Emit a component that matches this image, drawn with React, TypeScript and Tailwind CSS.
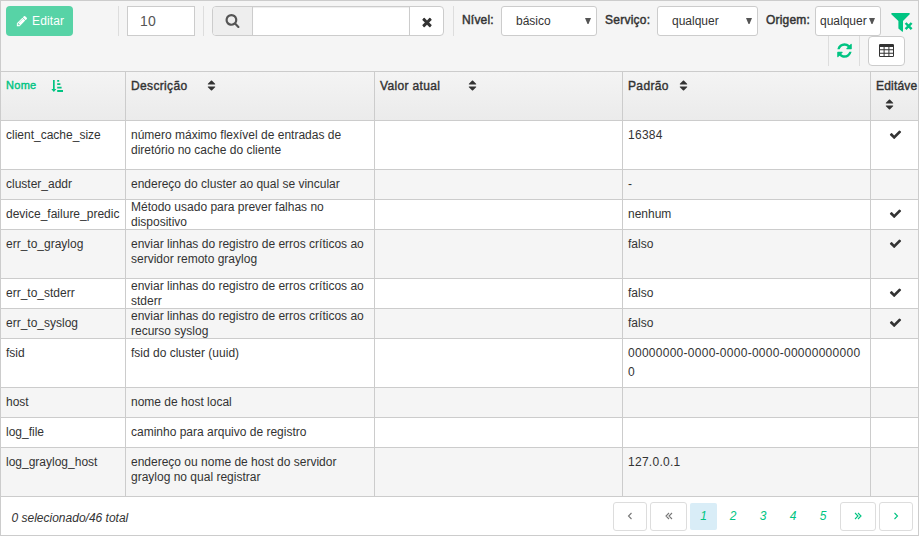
import React from "react";

const glyphs = {
  pencil:
    "M491 1536l91-91-235-235-91 91v107h128v128h107zm523-928q0-22-22-22-10 0-17 7l-542 542q-7 7-7 17 0 22 22 22 10 0 17-7l542-542q7-7 7-17zm-54-192l416 416-832 832h-416v-416zm683 96q0 53-37 90l-166 166-416-416 166-165q36-38 90-38 53 0 91 38l235 234q37 39 37 91z",
  search:
    "M1216 832q0-185-131.5-316.5t-316.5-131.5-316.5 131.5-131.5 316.5 131.5 316.5 316.5 131.5 316.5-131.5 131.5-316.5zm512 832q0 52-38 90t-90 38q-54 0-90-38l-343-342q-179 124-399 124-143 0-273.5-55.5t-225-150-150-225-55.5-273.5 55.5-273.5 150-225 225-150 273.5-55.5 273.5 55.5 225 150 150 225 55.5 273.5q0 220-124 399l343 343q37 37 37 90z",
  times:
    "M1490 1322q0 40-28 68l-136 136q-28 28-68 28t-68-28l-294-294-294 294q-28 28-68 28t-68-28l-136-136q-28-28-28-68t28-68l294-294-294-294q-28-28-28-68t28-68l136-136q28-28 68-28t68 28l294 294 294-294q28-28 68-28t68 28l136 136q28 28 28 68t-28 68l-294 294 294 294q28 28 28 68z",
  check:
    "M1671 566q0 40-28 68l-724 724-136 136q-28 28-68 28t-68-28l-136-136-362-362q-28-28-28-68t28-68l136-136q28-28 68-28t68 28l294 295 656-657q28-28 68-28t68 28l136 136q28 28 28 68z",
  refresh:
    "M1639 1056q0 5-1 7-64 268-268 434.5t-478 166.5q-146 0-282.5-55t-243.5-157l-129 129q-19 19-45 19t-45-19-19-45v-448q0-26 19-45t45-19h448q26 0 45 19t19 45-19 45l-137 137q71 66 161 102t187 36q134 0 250-65t186-179q11-17 53-117 8-23 30-23h192q13 0 22.5 9.5t9.5 22.5zm25-800v448q0 26-19 45t-45 19h-448q-26 0-45-19t-19-45 19-45l138-138q-148-137-349-137-134 0-250 65t-186 179q-11 17-53 117-8 23-30 23h-199q-13 0-22.5-9.5t-9.5-22.5v-7q65-268 270-434.5t480-166.5q146 0 284 55.5t245 156.5l130-129q19-19 45-19t45 19 19 45z",
  sort:
    "M1408 1088q0 26-19 45l-448 448q-19 19-45 19t-45-19l-448-448q-19-19-19-45t19-45 45-19h896q26 0 45 19t19 45zm0-384q0 26-19 45t-45 19h-896q-26 0-45-19t-19-45 19-45l448-448q19-19 45-19t45 19l448 448q19 19 19 45z",
};

function Glyph({ name, className }: { name: keyof typeof glyphs; className: string }) {
  return (
    <svg viewBox="0 0 1792 1792" fill="currentColor" className={`block shrink-0 ${className}`}>
      <path d={glyphs[name]} />
    </svg>
  );
}

function SortAsc() {
  return (
    <svg viewBox="0 0 12 12" fill="currentColor" className="mt-2 ml-[15px] block size-3 shrink-0">
      <path d="M2 0h1.7v9H5.4L2.85 12 .3 9H2zM6.2 0h2v1.8h-2zM6.2 3.3h3.2v1.8H6.2zM6.2 6.7h4.4v1.8H6.2zM6.2 10.1H12v1.8H6.2z" />
    </svg>
  );
}

function FilterClear() {
  return (
    <svg viewBox="0 0 22 19" className="mt-[7px] ml-2 block h-[19px] w-[22px] shrink-0 text-[#00c482]">
      <path fill="currentColor" d="M.8 0h17.4q1 .3.5 1.2L12 8v10.4q-.4.6-1 .2L7.4 15.4V8L.3 1.2Q0 .3.8 0z" />
      <path d="M14.6 10l6 6.2M20.6 10l-6 6.2" stroke="#f5f5f5" strokeWidth="4.4" />
      <path d="M14.6 10l6 6.2M20.6 10l-6 6.2" stroke="currentColor" strokeWidth="2.5" />
    </svg>
  );
}

function TableIcon() {
  return (
    <svg viewBox="0 0 15 13" className="block h-[13px] w-[15px]">
      <path
        fill="currentColor"
        fillRule="evenodd"
        d="M1.3 0h12.4Q15 0 15 1.3v10.4q0 1.3-1.3 1.3H1.3Q0 13 0 11.7V1.3Q0 0 1.3 0zM1 3v2.3h3.6V3zm4.6 0v2.3h3.8V3zm4.8 0v2.3H14V3zM1 6.3v2.4h3.6V6.3zm4.6 0v2.4h3.8V6.3zm4.8 0v2.4H14V6.3zM1 9.7V12h3.6V9.7zm4.6 0V12h3.8V9.7zm4.8 0V12H14V9.7z"
      />
    </svg>
  );
}

function Angle({ double, left }: { double?: boolean; left?: boolean }) {
  return (
    <svg
      viewBox="0 0 8 8"
      fill="none"
      stroke="currentColor"
      strokeWidth="1.1"
      className={`mb-px block size-2 ${left ? "-scale-x-100" : ""}`}
    >
      <path d={double ? "M1 1l3 3-3 3M4 1l3 3-3 3" : "M2.5 1l3 3-3 3"} />
    </svg>
  );
}

function Select({ value, className }: { value: string; className: string }) {
  return (
    <button className={`flex h-[30px] items-center justify-between rounded-[3px] border border-[#ccc] bg-white text-[12px] ${className}`}>
      <span>{value}</span>
      <svg viewBox="0 0 6 6" className="mb-px block size-1.5 shrink-0" fill="#555">
        <path d="M0 0h6L3.5 6h-1z" />
      </svg>
    </button>
  );
}

type Row = { name: string; lines: string[]; def?: string[]; editable?: boolean; tall?: boolean; tight?: boolean };

const rows: Row[] = [
  { name: "client_cache_size", lines: ["número máximo flexível de entradas de", "diretório no cache do cliente"], def: ["16384"], editable: true, tall: true },
  { name: "cluster_addr", lines: ["endereço do cluster ao qual se vincular"], def: ["-"] },
  { name: "device_failure_predic", lines: ["Método usado para prever falhas no", "dispositivo"], def: ["nenhum"], editable: true, tight: true },
  { name: "err_to_graylog", lines: ["enviar linhas do registro de erros críticos ao", "servidor remoto graylog"], def: ["falso"], editable: true, tall: true },
  { name: "err_to_stderr", lines: ["enviar linhas do registro de erros críticos ao", "stderr"], def: ["falso"], editable: true, tight: true },
  { name: "err_to_syslog", lines: ["enviar linhas do registro de erros críticos ao", "recurso syslog"], def: ["falso"], editable: true, tight: true },
  { name: "fsid", lines: ["fsid do cluster (uuid)"], def: ["00000000-0000-0000-0000-00000000000", "0"], tall: true },
  { name: "host", lines: ["nome de host local"] },
  { name: "log_file", lines: ["caminho para arquivo de registro"] },
  { name: "log_graylog_host", lines: ["endereço ou nome de host do servidor", "graylog no qual registrar"], def: ["127.0.0.1"], tall: true },
];

const columns = "grid grid-cols-[124px_249px_248px_248px_48px]";
const cell = "border-l border-[#ccc] pl-[5px] whitespace-nowrap";

export default function App() {
  return (
    <div className="flex h-[536px] w-[919px] flex-col overflow-hidden border border-[#ccc] bg-white font-['Liberation_Sans',Arial,sans-serif] text-[12px] text-[#333]">
      <header className="h-[70px] shrink-0 bg-[#f5f5f5] pt-[5px]">
        <div className="flex h-[30px] items-start pl-[5px]">
          <button className="flex h-[30px] w-[67px] items-center rounded-[4px] bg-[#57d3a6] pl-[10px] text-white">
            <Glyph name="pencil" className="size-3" />
            <span className="ml-1 tracking-[0.15px]">Editar</span>
          </button>
          <div className="ml-[45px] h-[30px] w-px bg-[#ddd]" />
          <div className="ml-2 flex h-[30px] w-[68px] items-center border border-[#ccc] bg-white pl-[12px] text-[14px] tracking-[0.3px] text-[#555]">10</div>
          <div className="ml-2 h-[30px] w-px bg-[#ddd]" />
          <div className="ml-2 flex h-[30px] w-[232px] overflow-hidden rounded-[4px] border border-[#ccc] bg-white">
            <div className="flex w-10 items-center justify-center border-r border-[#ccc] bg-[#eee] pb-px text-[#555]">
              <Glyph name="search" className="size-[15px]" />
            </div>
            <div className="w-[157px] border-r border-[#ccc] shadow-[inset_0_1px_1px_rgba(0,0,0,0.075)]" />
            <div className="flex w-[33px] items-center justify-center pt-0.5">
              <Glyph name="times" className="size-[14px]" />
            </div>
          </div>
          <div className="ml-[9px] h-[30px] w-px bg-[#ddd]" />
          <span className="ml-2 w-[39px] pt-1 leading-5 tracking-[0.2px] whitespace-nowrap [-webkit-text-stroke:0.45px_#333]">Nível:</span>
          <Select value="básico" className="w-24 pr-[5px] pl-[14px]" />
          <span className="ml-2 w-[52px] pt-1 leading-5 tracking-[0.25px] whitespace-nowrap [-webkit-text-stroke:0.45px_#333]">Serviço:</span>
          <Select value="qualquer" className="w-[101px] pr-[5px] pl-[14px]" />
          <span className="ml-2 w-[49px] pt-1 leading-5 tracking-[0.2px] whitespace-nowrap [-webkit-text-stroke:0.45px_#333]">Origem:</span>
          <Select value="qualquer" className="w-[66px] pr-[5px] pl-1" />
          <div className="ml-0.5">
            <FilterClear />
          </div>
        </div>
        <div className="flex h-[30px] justify-end pr-[13px]">
          <div className="flex w-8 items-center justify-center border-x border-[#ddd] pb-px text-[#00c482]">
            <Glyph name="refresh" className="size-[17px]" />
          </div>
          <button className="ml-2 flex w-[37px] items-center justify-center rounded-[4px] border border-[#ccc] bg-white pb-px">
            <TableIcon />
          </button>
        </div>
      </header>

      <div className={`${columns} h-[49px] shrink-0 border-t border-[#ccc] bg-linear-to-b from-[#f4f4f4] to-[#ebebeb] leading-5 [-webkit-text-stroke:0.4px]`}>
        <div className="flex pl-[5px] text-[11px] text-[#00c482]">
          <span className="w-[30px] pt-[3px] tracking-[0.3px]">Nome</span>
          <SortAsc />
        </div>
        <div className={`${cell} flex`}>
          <span className="w-[74px] pt-1 tracking-[0.35px]">Descrição</span>
          <Glyph name="sort" className="mt-[7px] size-[13px]" />
        </div>
        <div className={`${cell} flex`}>
          <span className="w-[86px] pt-1 tracking-[0.35px]">Valor atual</span>
          <Glyph name="sort" className="mt-[7px] size-[13px]" />
        </div>
        <div className={`${cell} flex`}>
          <span className="w-[49px] pt-1 tracking-[0.35px]">Padrão</span>
          <Glyph name="sort" className="mt-[7px] size-[13px]" />
        </div>
        <div className={`${cell} pt-1`}>
          <span className="block tracking-[0.2px]">Editáve</span>
          <Glyph name="sort" className="mt-[2px] ml-[7px] size-[13px]" />
        </div>
      </div>

      <main className="shrink-0">
        {rows.map((row, i) => (
          <div
            key={row.name}
            className={`${columns} border-t border-[#ccc] ${row.tall ? "h-[49px]" : "h-[30px]"} ${i % 2 ? "bg-[#f5f5f5]" : "bg-white"}`}
          >
            <div className="pt-1 pl-[5px] leading-5 whitespace-nowrap">{row.name}</div>
            <div className={`${cell} leading-[15px] ${row.tight ? "pt-0" : "pt-[7px]"}`}>
              {row.lines.map((line) => (
                <div key={line}>{line}</div>
              ))}
            </div>
            <div className={cell} />
            <div className={`${cell} pt-[5px] leading-[19px]`}>
              {row.def?.map((line) => (
                <div key={line} className={/^[\d]/.test(line) ? "tracking-[0.27px]" : ""}>
                  {line}
                </div>
              ))}
            </div>
            <div className="flex justify-center border-l border-[#ccc] pt-[7px] pl-px">
              {row.editable && <Glyph name="check" className="size-[13px]" />}
            </div>
          </div>
        ))}
      </main>

      <footer className="flex flex-1 items-start justify-between border-t border-[#ccc] pt-[5px] pr-[5px] pl-[10.5px] italic">
        <span className="pt-[6px] leading-5">0 selecionado/46 total</span>
        <nav className="flex items-center text-[#00c482]">
          <span className="flex h-[29px] w-[34px] items-center justify-center rounded-[3px] border border-[#ddd] text-[#777]">
            <Angle left />
          </span>
          <span className="ml-[3px] flex h-[29px] w-[37px] items-center justify-center rounded-[3px] border border-[#ddd] text-[#777]">
            <Angle double left />
          </span>
          <span className="ml-[3px] flex h-[27px] w-[27px] items-center justify-center rounded-[2px] bg-[#d9edf7] pb-0.5">1</span>
          <span className="ml-[1px] w-[30px] pb-0.5 text-center">2</span>
          <span className="w-[30px] pb-0.5 text-center">3</span>
          <span className="w-[30px] pb-0.5 text-center">4</span>
          <span className="w-[30px] pb-0.5 text-center">5</span>
          <span className="ml-[2px] flex h-[29px] w-9 items-center justify-center rounded-[3px] border border-[#ddd]">
            <Angle double />
          </span>
          <span className="ml-[3px] flex h-[29px] w-[34px] items-center justify-center rounded-[3px] border border-[#ddd]">
            <Angle />
          </span>
        </nav>
      </footer>
    </div>
  );
}
